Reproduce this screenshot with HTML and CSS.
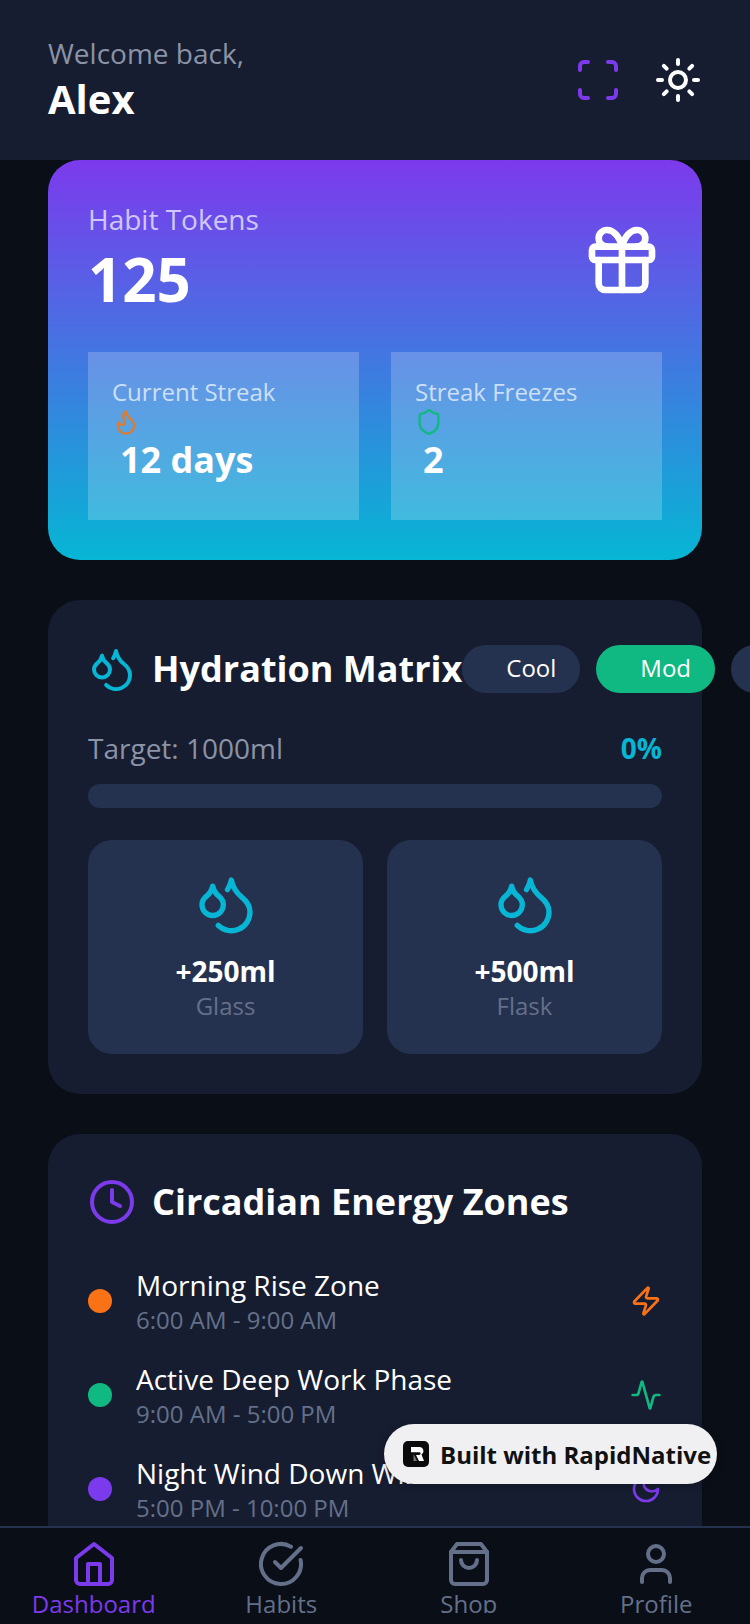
FILE: index.html
```html
<!DOCTYPE html>
<html>
<head>
  <title>Dashboard</title>
  <link rel="stylesheet" href="styles.css">
</head>
<body>
  <div class="app">
    <header class="top-bar">
      <div>
        <div class="welcome">Welcome back,</div>
        <div class="user-name">Alex</div>
      </div>
      <div class="top-actions">
        <svg class="icon icon-48 purple" viewBox="0 0 24 24"><path d="M3 7V5a2 2 0 0 1 2-2h2"/><path d="M17 3h2a2 2 0 0 1 2 2v2"/><path d="M21 17v2a2 2 0 0 1-2 2h-2"/><path d="M7 21H5a2 2 0 0 1-2-2v-2"/></svg>
        <svg class="icon icon-48 white" viewBox="0 0 24 24"><circle cx="12" cy="12" r="4"/><path d="M12 2v2"/><path d="M12 20v2"/><path d="m4.93 4.93 1.41 1.41"/><path d="m17.66 17.66 1.41 1.41"/><path d="M2 12h2"/><path d="M20 12h2"/><path d="m6.34 17.66-1.41 1.41"/><path d="m19.07 4.93-1.41 1.41"/></svg>
      </div>
    </header>

    <main class="content">
      <section class="token-card">
        <div class="token-top">
          <div>
            <div class="token-label">Habit Tokens</div>
            <div class="token-count">125</div>
          </div>
          <svg class="icon icon-80 white" viewBox="0 0 24 24"><rect x="3" y="8" width="18" height="4" rx="1"/><path d="M12 8v13"/><path d="M19 12v7a2 2 0 0 1-2 2H7a2 2 0 0 1-2-2v-7"/><path d="M7.5 8a2.5 2.5 0 0 1 0-5A4.8 8 0 0 1 12 8a4.8 8 0 0 1 4.5-5 2.5 2.5 0 0 1 0 5"/></svg>
        </div>
        <div class="stat-row">
          <div class="stat-box">
            <div class="stat-label">Current Streak</div>
            <svg class="icon icon-28 orange" viewBox="0 0 24 24"><path d="M8.5 14.5A2.5 2.5 0 0 0 11 12c0-1.38-.5-2-1-3-1.072-2.143-.224-4.054 2-6 .5 2.5 2 4.9 4 6.5 2 1.6 3 3.5 3 5.5a7 7 0 1 1-14 0c0-1.153.433-2.294 1-3a2.5 2.5 0 0 0 2.5 2.5z"/></svg>
            <div class="stat-value">12 days</div>
          </div>
          <div class="stat-box">
            <div class="stat-label">Streak Freezes</div>
            <svg class="icon icon-28 green" viewBox="0 0 24 24"><path d="M20 13c0 5-3.5 7.5-7.66 8.95a1 1 0 0 1-.67-.01C7.5 20.5 4 18 4 13V6a1 1 0 0 1 1-1c2 0 4.5-1.2 6.24-2.72a1.17 1.17 0 0 1 1.52 0C14.51 3.81 17 5 19 5a1 1 0 0 1 1 1z"/></svg>
            <div class="stat-value">2</div>
          </div>
        </div>
      </section>

      <section class="card">
        <div class="card-head">
          <svg class="icon icon-48 cyan" viewBox="0 0 24 24"><path d="M7 16.3c2.2 0 4-1.83 4-4.05 0-1.16-.57-2.26-1.71-3.19S7.29 6.75 7 5.3c-.29 1.45-1.14 2.84-2.29 3.76S3 11.1 3 12.25c0 2.22 1.8 4.05 4 4.05z"/><path d="M12.56 6.6A10.97 10.97 0 0 0 14 3.02c.5 2.5 2 4.9 4 6.5s3 3.5 3 5.5a6.98 6.98 0 0 1-11.91 4.97"/></svg>
          <h2 class="card-title">Hydration Matrix</h2>
          <div class="pills">
            <span class="pill">Cool</span>
            <span class="pill pill-active">Mod</span>
            <span class="pill">Hot</span>
          </div>
        </div>
        <div class="target-row">
          <span class="target-text">Target: 1000ml</span>
          <span class="target-percent">0%</span>
        </div>
        <div class="progress"></div>
        <div class="water-row">
          <div class="water-btn">
            <svg class="icon icon-64 cyan" viewBox="0 0 24 24"><path d="M7 16.3c2.2 0 4-1.83 4-4.05 0-1.16-.57-2.26-1.71-3.19S7.29 6.75 7 5.3c-.29 1.45-1.14 2.84-2.29 3.76S3 11.1 3 12.25c0 2.22 1.8 4.05 4 4.05z"/><path d="M12.56 6.6A10.97 10.97 0 0 0 14 3.02c.5 2.5 2 4.9 4 6.5s3 3.5 3 5.5a6.98 6.98 0 0 1-11.91 4.97"/></svg>
            <div class="water-amount">+250ml</div>
            <div class="water-name">Glass</div>
          </div>
          <div class="water-btn">
            <svg class="icon icon-64 cyan" viewBox="0 0 24 24"><path d="M7 16.3c2.2 0 4-1.83 4-4.05 0-1.16-.57-2.26-1.71-3.19S7.29 6.75 7 5.3c-.29 1.45-1.14 2.84-2.29 3.76S3 11.1 3 12.25c0 2.22 1.8 4.05 4 4.05z"/><path d="M12.56 6.6A10.97 10.97 0 0 0 14 3.02c.5 2.5 2 4.9 4 6.5s3 3.5 3 5.5a6.98 6.98 0 0 1-11.91 4.97"/></svg>
            <div class="water-amount">+500ml</div>
            <div class="water-name">Flask</div>
          </div>
        </div>
      </section>

      <section class="card">
        <div class="card-head zones-head">
          <svg class="icon icon-48 purple" viewBox="0 0 24 24"><circle cx="12" cy="12" r="10"/><polyline points="12 6 12 12 16 14"/></svg>
          <h2 class="card-title">Circadian Energy Zones</h2>
        </div>
        <div class="zone">
          <span class="dot dot-orange"></span>
          <div class="zone-text">
            <div class="zone-name">Morning Rise Zone</div>
            <div class="zone-time">6:00 AM - 9:00 AM</div>
          </div>
          <svg class="icon icon-32 orange-bright" viewBox="0 0 24 24"><path d="M4 14a1 1 0 0 1-.78-1.63l9.9-10.2a.5.5 0 0 1 .86.46l-1.92 6.02A1 1 0 0 0 13 10h7a1 1 0 0 1 .78 1.63l-9.9 10.2a.5.5 0 0 1-.86-.46l1.92-6.02A1 1 0 0 0 11 14z"/></svg>
        </div>
        <div class="zone">
          <span class="dot dot-green"></span>
          <div class="zone-text">
            <div class="zone-name">Active Deep Work Phase</div>
            <div class="zone-time">9:00 AM - 5:00 PM</div>
          </div>
          <svg class="icon icon-32 green" viewBox="0 0 24 24"><path d="M22 12h-2.48a2 2 0 0 0-1.93 1.46l-2.35 8.36a.25.25 0 0 1-.48 0L9.24 2.18a.25.25 0 0 0-.48 0l-2.35 8.36A2 2 0 0 1 4.49 12H2"/></svg>
        </div>
        <div class="zone">
          <span class="dot dot-purple"></span>
          <div class="zone-text">
            <div class="zone-name">Night Wind Down Window</div>
            <div class="zone-time">5:00 PM - 10:00 PM</div>
          </div>
          <svg class="icon icon-32 purple" viewBox="0 0 24 24"><path d="M12 3a6 6 0 0 0 9 9 9 9 0 1 1-9-9Z"/></svg>
        </div>
      </section>
    </main>

    <nav class="tab-bar">
      <div class="tab tab-active">
        <svg class="icon icon-48" viewBox="0 0 24 24"><path d="m3 9 9-7 9 7v11a2 2 0 0 1-2 2H5a2 2 0 0 1-2-2z"/><polyline points="9 22 9 12 15 12 15 22"/></svg>
        <span class="tab-label">Dashboard</span>
      </div>
      <div class="tab">
        <svg class="icon icon-48" viewBox="0 0 24 24"><path d="M21.801 10A10 10 0 1 1 17 3.335"/><path d="m9 11 3 3L22 4"/></svg>
        <span class="tab-label">Habits</span>
      </div>
      <div class="tab">
        <svg class="icon icon-48" viewBox="0 0 24 24"><path d="M6 2 3 6v14a2 2 0 0 0 2 2h14a2 2 0 0 0 2-2V6l-3-4Z"/><path d="M3 6h18"/><path d="M16 10a4 4 0 0 1-8 0"/></svg>
        <span class="tab-label">Shop</span>
      </div>
      <div class="tab">
        <svg class="icon icon-48" viewBox="0 0 24 24"><path d="M19 21v-2a4 4 0 0 0-4-4H9a4 4 0 0 0-4 4v2"/><circle cx="12" cy="7" r="4"/></svg>
        <span class="tab-label">Profile</span>
      </div>
    </nav>

    <div class="built-badge">
      <svg class="badge-logo" viewBox="0 0 26 26"><rect width="26" height="26" rx="5" fill="#0b0b0c"/><path d="M8 6h8.5a4 4 0 0 1 2 7.4L21 20h-5l-3-6h3.2a1.3 1.3 0 0 0 0-2.8H8z" fill="#fff"/><path d="M10.5 13 14 20h-3.5z" fill="#777"/></svg>
      <span class="badge-text">Built with RapidNative</span>
    </div>
  </div>
</body>
</html>
```

FILE: styles.css
```css
* {
  box-sizing: border-box;
}

html, body {
  margin: 0;
  padding: 0;
}

body {
  font-family: "Open Sans", "Noto Sans", sans-serif;
  background-color: #0a0e17;
}

.app {
  position: relative;
  width: 750px;
  height: 1624px;
  display: flex;
  flex-direction: column;
  overflow: hidden;
  background-color: #0a0e17;
}

.icon {
  display: block;
  flex-shrink: 0;
  fill: none;
  stroke: currentColor;
  stroke-width: 2;
  stroke-linecap: round;
  stroke-linejoin: round;
}

.icon-28 { width: 28px; height: 28px; }
.icon-32 { width: 32px; height: 32px; }
.icon-48 { width: 48px; height: 48px; }
.icon-64 { width: 64px; height: 64px; }
.icon-80 { width: 80px; height: 80px; }

.white { color: #fff; }
.purple { color: #7c3aed; }
.cyan { color: #06b6d4; }
.green { color: #10b981; }
.orange { color: #e07a2c; }
.orange-bright { color: #f97316; }

/* header */
.top-bar {
  height: 160px;
  flex-shrink: 0;
  display: flex;
  justify-content: space-between;
  align-items: center;
  padding: 0 48px;
  background-color: #161d30;
}

.welcome {
  font-size: 28px;
  line-height: 38px;
  color: #8b93a7;
}

.user-name {
  font-size: 40px;
  line-height: 54px;
  font-weight: 700;
  color: #fff;
}

.top-actions {
  display: flex;
  gap: 32px;
}

/* scroll area */
.content {
  flex: 1;
  min-height: 0;
  overflow: hidden;
  padding: 0 48px;
  display: flex;
  flex-direction: column;
  gap: 40px;
}

.token-card {
  flex-shrink: 0;
  height: 400px;
  padding: 40px;
  border-radius: 32px;
  background: linear-gradient(180deg, #7c3aed, #06b6d4);
}

.token-top {
  display: flex;
  justify-content: space-between;
  align-items: center;
}

.token-label {
  font-size: 28px;
  line-height: 38px;
  color: rgba(255, 255, 255, 0.7);
}

.token-count {
  font-size: 60px;
  line-height: 82px;
  font-weight: 700;
  color: #fff;
}

.stat-row {
  display: flex;
  gap: 32px;
  margin-top: 32px;
}

.stat-box {
  flex: 1;
  height: 168px;
  padding: 24px;
  background-color: rgba(255, 255, 255, 0.2);
}

.stat-label {
  font-size: 24px;
  line-height: 32px;
  color: rgba(255, 255, 255, 0.7);
}

.stat-value {
  margin-left: 8px;
  font-size: 36px;
  line-height: 48px;
  font-weight: 700;
  color: #fff;
}

.card {
  flex-shrink: 0;
  padding: 40px;
  border-radius: 32px;
  background-color: #161d30;
}

.card-head {
  display: flex;
  align-items: center;
  height: 48px;
  margin-top: 5px;
}

.card-title {
  margin: 0 0 0 16px;
  font-size: 36px;
  line-height: 48px;
  font-weight: 700;
  color: #fff;
  white-space: nowrap;
}

.pills {
  display: flex;
  gap: 16px;
  flex-shrink: 0;
}

.pill {
  height: 48px;
  padding: 0 24px 0 44px;
  border-radius: 24px;
  font-size: 24px;
  line-height: 46px;
  color: #fff;
  background-color: #25324f;
}

.pill-active {
  background-color: #10b981;
}

.target-row {
  display: flex;
  justify-content: space-between;
  align-items: center;
  margin-top: 36px;
  line-height: 38px;
}

.target-text {
  font-size: 28px;
  color: #8b93a7;
}

.target-percent {
  font-size: 28px;
  font-weight: 700;
  color: #06b6d4;
}

.progress {
  height: 24px;
  margin-top: 17px;
  border-radius: 12px;
  background-color: #25324f;
}

.water-row {
  display: flex;
  gap: 24px;
  margin-top: 32px;
}

.water-btn {
  flex: 1;
  height: 214px;
  padding-top: 32px;
  display: flex;
  flex-direction: column;
  align-items: center;
  border-radius: 24px;
  background-color: #25324f;
}

.water-amount {
  margin-top: 16px;
  font-size: 28px;
  line-height: 38px;
  font-weight: 700;
  color: #fff;
}

.water-name {
  font-size: 24px;
  line-height: 32px;
  color: #64708a;
}

.zones-head {
  margin-top: 4px;
  margin-bottom: 40px;
}

.zone {
  display: flex;
  align-items: center;
  margin-bottom: 24px;
}

.dot {
  width: 24px;
  height: 24px;
  flex-shrink: 0;
  margin-right: 24px;
  border-radius: 50%;
}

.dot-orange { background-color: #f97316; }
.dot-green { background-color: #10b981; }
.dot-purple { background-color: #7c3aed; }

.zone-text {
  flex: 1;
  min-width: 0;
}

.zone-name {
  font-size: 28px;
  line-height: 38px;
  color: #fff;
  white-space: nowrap;
}

.zone-time {
  font-size: 24px;
  line-height: 32px;
  color: #64708a;
}

/* bottom tabs */
.tab-bar {
  height: 98px;
  flex-shrink: 0;
  display: flex;
  padding-top: 12px;
  border-top: 2px solid #25324f;
  background-color: #0a0e17;
}

.tab {
  flex: 1;
  height: 73px;
  display: flex;
  flex-direction: column;
  align-items: center;
  overflow: hidden;
  color: #64708a;
}

.tab-active {
  color: #7c3aed;
}

.tab-label {
  font-size: 24px;
  line-height: 32px;
  margin-top: 0;
}

/* floating badge */
.built-badge {
  position: absolute;
  left: 384px;
  top: 1424px;
  width: 333px;
  height: 60px;
  display: flex;
  align-items: center;
  gap: 11px;
  padding-left: 19px;
  border-radius: 30px;
  background-color: #f0f0f3;
  box-shadow: 0 2px 8px rgba(0, 0, 0, 0.25);
}

.badge-logo {
  width: 26px;
  height: 26px;
  flex-shrink: 0;
}

.badge-text {
  font-size: 24px;
  font-weight: 700;
  color: #111;
  white-space: nowrap;
}
```
